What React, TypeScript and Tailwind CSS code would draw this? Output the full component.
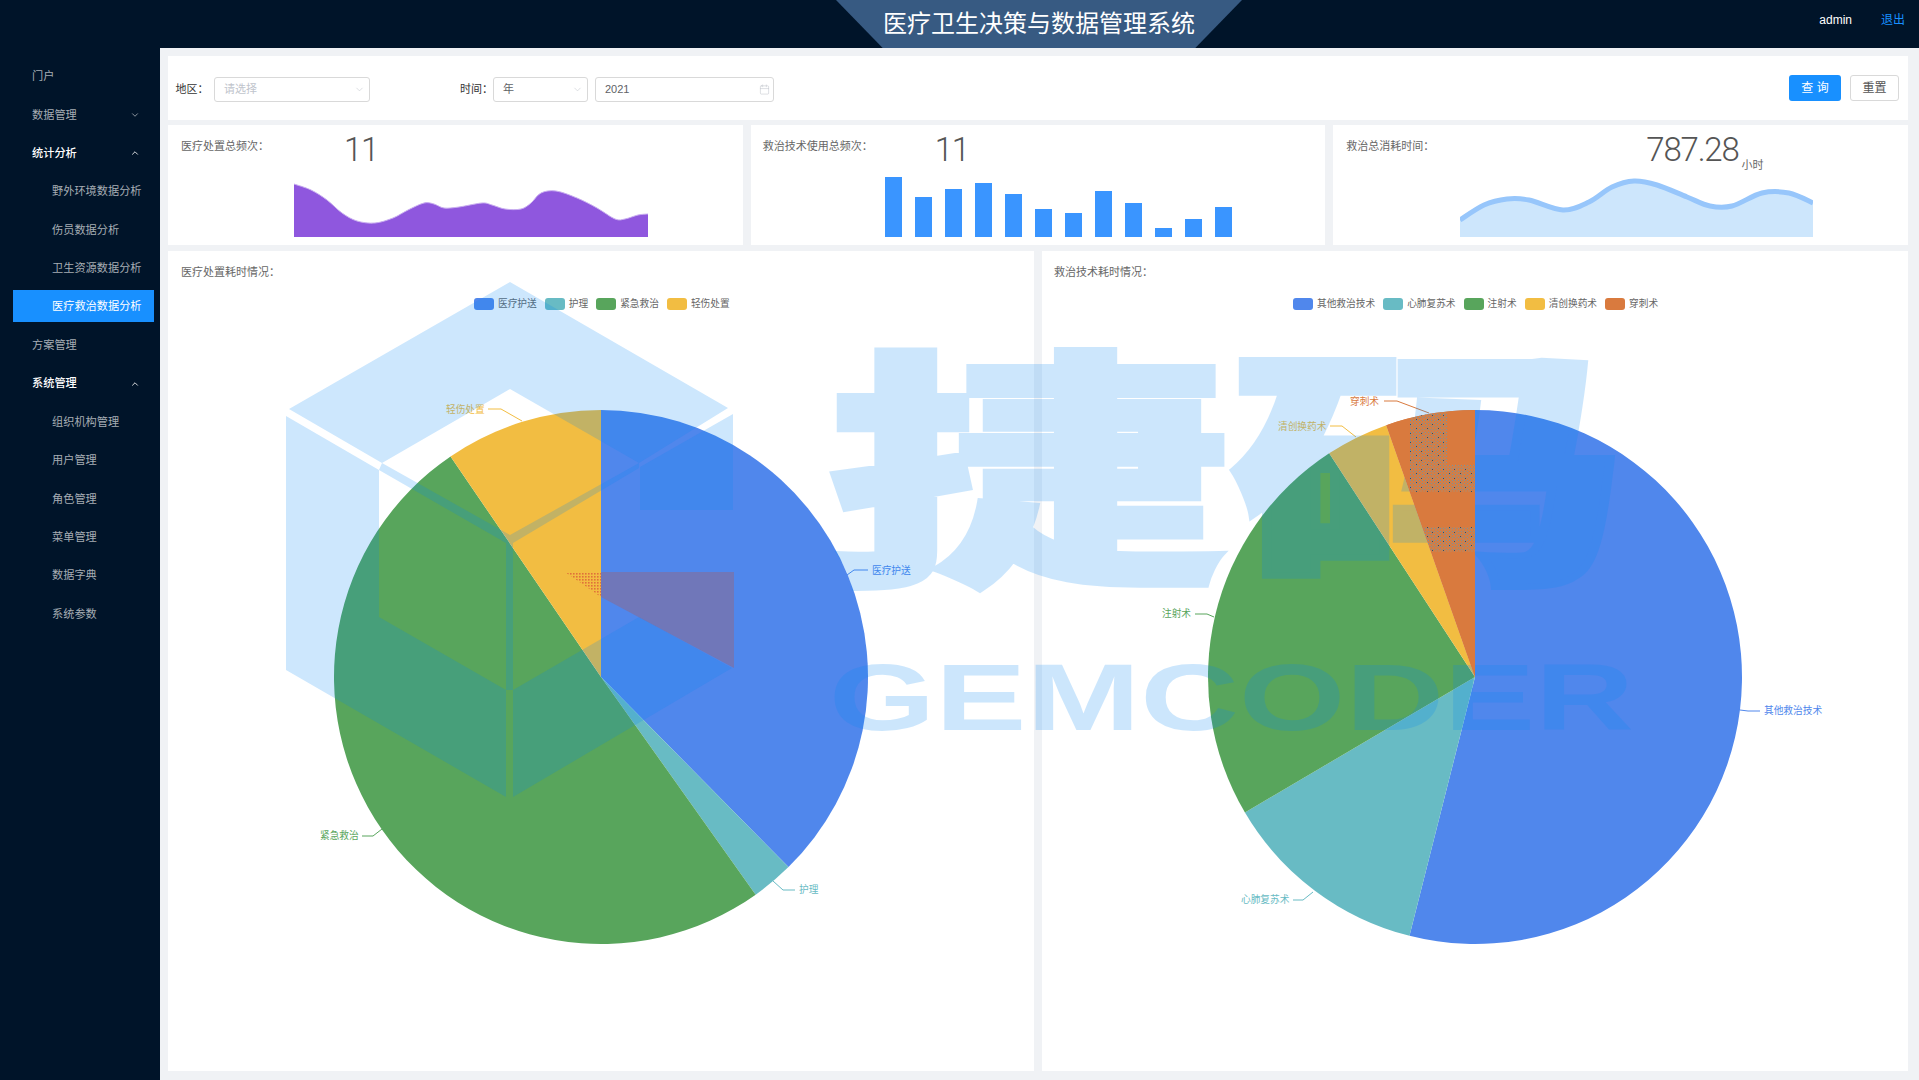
import { ChevronDown, ChevronUp, Calendar } from "lucide-react";

const BLUE = "#5087ec";
const TEAL = "#68bbc4";
const GREEN = "#58a55c";
const YELLOW = "#f2bd42";
const ORANGE = "#d97a3e";

type Slice = {
  name: string;
  color: string;
  to: number;
  line: string;
  labelX: number;
  labelY: number;
};

const careSlices: Slice[] = [
  { name: "医疗护送", color: BLUE, to: 135.4, line: "847,575 854,570 868,570", labelX: 872, labelY: 570 },
  { name: "护理", color: TEAL, to: 144.6, line: "773,881 783,890 795,890", labelX: 799, labelY: 889 },
  { name: "紧急救治", color: GREEN, to: 325.7, line: "382,829 373,836 362,836", labelX: 320, labelY: 835 },
  { name: "轻伤处置", color: YELLOW, to: 360, line: "522,421 501,409 488,409", labelX: 446, labelY: 409 },
];

const techSlices: Slice[] = [
  { name: "其他救治技术", color: BLUE, to: 194.2, line: "1740,710 1748,711 1760,711", labelX: 1764, labelY: 710 },
  { name: "心肺复苏术", color: TEAL, to: 239.5, line: "1313,892 1303,900 1293,900", labelX: 1241, labelY: 899 },
  { name: "注射术", color: GREEN, to: 326.9, line: "1214,617 1207,614 1195,614", labelX: 1162, labelY: 613 },
  { name: "清创换药术", color: YELLOW, to: 340.6, line: "1356,437 1342,426 1330,426", labelX: 1278, labelY: 426 },
  { name: "穿刺术", color: ORANGE, to: 360, line: "1429,413 1397,401 1384,401", labelX: 1350, labelY: 401 },
];

const menu = [
  { label: "门户", level: 0 },
  { label: "数据管理", level: 0, arrow: "down" },
  { label: "统计分析", level: 0, arrow: "up", open: true },
  { label: "野外环境数据分析", level: 1 },
  { label: "伤员数据分析", level: 1 },
  { label: "卫生资源数据分析", level: 1 },
  { label: "医疗救治数据分析", level: 1, active: true },
  { label: "方案管理", level: 0 },
  { label: "系统管理", level: 0, arrow: "up", open: true },
  { label: "组织机构管理", level: 1 },
  { label: "用户管理", level: 1 },
  { label: "角色管理", level: 1 },
  { label: "菜单管理", level: 1 },
  { label: "数据字典", level: 1 },
  { label: "系统参数", level: 1 },
];

const purpleWave: [number, number][] = [
  [0, 7], [17, 13], [33, 23], [48, 36], [63, 44], [81, 46], [99, 41], [114, 33], [130, 26],
  [140, 27], [150, 31], [165, 30], [188, 26], [198, 28], [211, 32], [227, 32], [237, 26],
  [247, 16], [262, 14], [283, 21], [303, 31], [321, 42], [331, 42], [344, 38], [354, 37],
];

const blueWave: [number, number][] = [
  [0, 43], [24, 28], [47, 22], [69, 23], [103, 33], [129, 25], [152, 10], [174, 4], [197, 8],
  [227, 20], [250, 29], [272, 29], [302, 16], [329, 16], [353, 26],
];

const bars = [60, 40, 48, 54, 43, 28, 24, 46, 34, 9, 18, 30];

function smooth(pts: [number, number][]) {
  let d = `M${pts[0][0]} ${pts[0][1]}`;
  for (let i = 0; i < pts.length - 1; i++) {
    const p0 = pts[Math.max(i - 1, 0)];
    const p1 = pts[i];
    const p2 = pts[i + 1];
    const p3 = pts[Math.min(i + 2, pts.length - 1)];
    d += ` C${p1[0] + (p2[0] - p0[0]) / 6} ${p1[1] + (p2[1] - p0[1]) / 6} ${p2[0] - (p3[0] - p1[0]) / 6} ${p2[1] - (p3[1] - p1[1]) / 6} ${p2[0]} ${p2[1]}`;
  }
  return d;
}

function Wave({ pts, w, fill, stroke, strokeWidth }: { pts: [number, number][]; w: number; fill: string; stroke: string; strokeWidth: number }) {
  const line = smooth(pts);
  return (
    <svg width={w} height={60} viewBox={`0 0 ${w} 60`}>
      <path d={`${line} L${w} 60 L0 60 Z`} fill={fill} />
      <path d={line} fill="none" stroke={stroke} strokeWidth={strokeWidth} />
    </svg>
  );
}

function wedge(cx: number, cy: number, r: number, from: number, to: number) {
  const pt = (deg: number) => {
    const a = (deg * Math.PI) / 180;
    return `${cx + r * Math.sin(a)} ${cy - r * Math.cos(a)}`;
  };
  return `M${cx} ${cy} L${pt(from)} A${r} ${r} 0 ${to - from > 180 ? 1 : 0} 1 ${pt(to)} Z`;
}

function Pie({ x0, cx, slices }: { x0: number; cx: number; slices: Slice[] }) {
  let from = 0;
  return (
    <svg className="block w-full flex-1" viewBox={`${x0} 320 866 751`} preserveAspectRatio="xMinYMin meet">
      {slices.map((s) => {
        const d = wedge(cx, 677, 267, from, s.to);
        from = s.to;
        return <path key={s.name} d={d} fill={s.color} />;
      })}
      {slices.map((s) => (
        <g key={s.name}>
          <polyline points={s.line} fill="none" stroke={s.color} strokeWidth={1} />
          <text x={s.labelX} y={s.labelY} fill={s.color} fontSize={9.7} dominantBaseline="central">
            {s.name}
          </text>
        </g>
      ))}
    </svg>
  );
}

function Legend({ items, className }: { items: Slice[]; className: string }) {
  return (
    <div className={`flex items-center gap-2 h-3 text-[9.7px] text-[#666] ${className}`}>
      {items.map((s) => (
        <div key={s.name} className="flex items-center gap-1">
          <span className="w-5 h-[11.5px] rounded-[3px]" style={{ background: s.color }} />
          <span>{s.name}</span>
        </div>
      ))}
    </div>
  );
}

function Select({ text, className, muted }: { text: string; className: string; muted?: boolean }) {
  return (
    <div className={`h-[25px] flex items-center justify-between pl-[9px] pr-[4px] border border-[#d9d9d9] rounded-[3px] text-[11px] ${muted ? "text-[#c0c4cc]" : "text-[#606266]"} ${className}`}>
      <span>{text}</span>
      <ChevronDown className="w-[11px] h-[11px] text-[#c0c4cc]" strokeWidth={1.2} />
    </div>
  );
}

// The logo overlay sits on top of the whole page
function Watermark() {
  const spike = wedge(1475, 677, 267, 340.6, 360);
  return (
    <svg className="absolute left-0 top-0 pointer-events-none" width={1919} height={1080} viewBox="0 0 1919 1080">
      <defs>
        <pattern id="fine" width={3} height={3} patternUnits="userSpaceOnUse">
          <rect width={1} height={1} fill="#6f98a8" />
          <rect x={1.5} y={1.5} width={1} height={1} fill="#8a9a94" />
        </pattern>
        <pattern id="dark" width={11} height={9} patternUnits="userSpaceOnUse">
          <rect x={2} y={1} width={1} height={1} fill="#2f4f6b" />
          <rect x={8} y={5} width={1} height={1} fill="#2f4f6b" />
        </pattern>
        <pattern id="speck" width={3} height={3} patternUnits="userSpaceOnUse">
          <rect width={1.6} height={1.6} fill="#e0703a" />
        </pattern>
        <clipPath id="spike">
          <path d={spike} />
        </clipPath>
      </defs>
      <path
        fill="rgba(5,135,245,0.2)"
        d="M510 282 L728 408 L639 463 L510 389 L382 463 L289 409 Z
           M286 416 L379 470 L379 617 L506 690 L506 797 L286 670 Z
           M382 463 L510 535 L639 463 L639 468 L513 543 L513 690 L506 690 L506 543 L379 470 Z
           M513 690 L639 617 L732 668 L513 797 Z
           M640 467 L733 414 L733 510 L640 510 Z"
      />
      <path fill="rgba(208,71,30,0.25)" d="M601 572 L734 572 L734 668 L601 597 Z" />
      <path fill="url(#speck)" d="M565 572 L601 572 L601 597 Z" />
      <text
        x={828}
        y={564}
        textLength={800}
        lengthAdjust="spacingAndGlyphs"
        fontSize={250}
        fontWeight={900}
        fontFamily="'Noto Sans CJK SC', sans-serif"
        fill="rgb(5,135,245)"
        stroke="rgb(5,135,245)"
        strokeWidth={6}
        opacity={0.2}
      >
        捷码
      </text>
      <text
        x={829}
        y={730}
        textLength={805}
        lengthAdjust="spacingAndGlyphs"
        fontSize={95}
        fontWeight={700}
        fontFamily="'Liberation Sans', sans-serif"
        fill="rgb(5,135,245)"
        opacity={0.2}
      >
        GEMCODER
      </text>
      <path d={spike} fill={ORANGE} />
      <g clipPath="url(#spike)">
        <path d="M1410 412 H1447 V465 H1475 V492 H1410 Z M1423 527 H1475 V552 H1423 Z" fill="url(#fine)" />
        <path d="M1410 412 H1447 V465 H1475 V492 H1410 Z M1423 527 H1475 V552 H1423 Z" fill="url(#dark)" />
      </g>
    </svg>
  );
}

export default function App() {
  return (
    <div className="relative w-full h-screen overflow-hidden flex flex-col font-['Liberation_Sans','Noto_Sans_CJK_SC',sans-serif] bg-[#001429]">
      {/* Header */}
      <header className="relative h-12 shrink-0">
        <div className="absolute left-[836px] top-0 w-[406px] h-12 flex items-center justify-center bg-[#375a82] [clip-path:polygon(0_0,100%_0,88.5%_100%,11.5%_100%)]">
          <h1 className="text-white text-2xl font-normal">医疗卫生决策与数据管理系统</h1>
        </div>
        <div className="absolute right-[14px] top-0 h-10 flex items-center gap-[29px] text-xs">
          <span className="text-white">admin</span>
          <span className="text-[#1890ff]">退出</span>
        </div>
      </header>

      <div className="flex flex-1 min-h-0">
        {/* Sidebar */}
        <aside className="w-40 shrink-0 pt-[8.5px] text-[11.2px]">
          {menu.map((m) => (
            <div key={m.label} className="h-[38.4px] flex items-center pl-[13px] pr-[6px]">
              <div
                className={`relative w-full h-8 flex items-center ${m.level ? "pl-[39px]" : "pl-[19px]"} ${
                  m.active ? "bg-[#1890ff] text-white" : m.open ? "pt-[2px] text-white font-medium" : "pt-[2px] text-[#a6adb4]"
                }`}
              >
                {m.label}
                {m.arrow === "down" && <ChevronDown className="absolute right-[14px] w-[10px] h-[10px]" />}
                {m.arrow === "up" && <ChevronUp className="absolute right-[14px] w-[10px] h-[10px]" />}
              </div>
            </div>
          ))}
        </aside>

        {/* Content */}
        <main className="flex-1 min-w-0 bg-[#f0f2f5] pt-2 pl-2 pr-[11px] pb-[9px] flex flex-col">
          <div className="h-16 shrink-0 bg-white flex items-center pl-[7.5px] pr-[9px] text-[11px] text-[#333]">
            <div className="flex items-center mt-[3px]">
              <span className="w-[38.5px]">地区：</span>
              <Select text="请选择" muted className="w-[156px]" />
              <span className="ml-[90px] w-[33px]">时间：</span>
              <Select text="年" className="w-[95px]" />
              <div className="ml-[7px] w-[179px] h-[25px] flex items-center justify-between pl-[9px] pr-[3px] border border-[#d9d9d9] rounded-[3px] text-[#606266]">
                <span>2021</span>
                <Calendar className="w-[11px] h-[11px] text-[#c0c4cc]" strokeWidth={1.2} />
              </div>
            </div>
            <div className="ml-auto flex gap-[9px] text-xs">
              <button className="w-[52px] h-[26px] rounded-[3px] bg-[#1890ff] text-white">查 询</button>
              <button className="w-[49px] h-[26px] rounded-[3px] border border-[#d9d9d9] text-[#555]">重置</button>
            </div>
          </div>

          <div className="mt-[5px] h-[120px] shrink-0 grid grid-cols-3 gap-2">
            <div className="bg-white flex flex-col pb-2">
              <div className="flex pl-[13px] text-[11px] text-[#666] pt-[13px]">
                <span className="w-[163px]">医疗处置总频次：</span>
                <span className="-mt-[6px] font-['Roboto'] text-[33px] leading-[36px] tracking-[-1.2px] font-light text-[#555]">11</span>
              </div>
              <div className="mt-auto ml-[126px]">
                <Wave pts={purpleWave} w={354} fill="#8f57de" stroke="#c9aef0" strokeWidth={1} />
              </div>
            </div>
            <div className="bg-white flex flex-col pb-2">
              <div className="flex pl-3 text-[11px] text-[#666] pt-[13px]">
                <span className="w-[172px]">救治技术使用总频次：</span>
                <span className="-mt-[6px] font-['Roboto'] text-[33px] leading-[36px] tracking-[-1.2px] font-light text-[#555]">11</span>
              </div>
              <div className="mt-auto ml-[134px] h-[60px] flex items-end gap-[13px]">
                {bars.map((h, i) => (
                  <div key={i} className="w-[17px] bg-[#3a95ff]" style={{ height: h }} />
                ))}
              </div>
            </div>
            <div className="bg-white flex flex-col pb-2">
              <div className="flex pl-[13px] text-[11px] text-[#666] pt-[13px]">
                <span className="w-[300px]">救治总消耗时间：</span>
                <span className="-mt-[6px] font-['Roboto'] text-[33px] leading-[36px] tracking-[-1.2px] font-light text-[#555]">787.28</span>
                <span className="mt-[19px] ml-[3px]">小时</span>
              </div>
              <div className="mt-auto ml-[127px]">
                <Wave pts={blueWave} w={353} fill="#cde6fc" stroke="#97c6fb" strokeWidth={5} />
              </div>
            </div>
          </div>

          <div className="mt-[6px] flex-1 min-h-0 grid grid-cols-2 gap-2">
            <section className="bg-white flex flex-col min-h-0">
              <div className="pl-[13px] pt-[15px] text-[11px] leading-[13px] text-[#666]">医疗处置耗时情况：</div>
              <Legend items={careSlices} className="mt-[19px] ml-[306px] mb-[10px]" />
              <Pie x0={168} cx={601} slices={careSlices} />
            </section>
            <section className="bg-white flex flex-col min-h-0">
              <div className="pl-3 pt-[15px] text-[11px] leading-[13px] text-[#666]">救治技术耗时情况：</div>
              <Legend items={techSlices} className="mt-[19px] ml-[251px] mb-[10px]" />
              <Pie x0={1042} cx={1475} slices={techSlices} />
            </section>
          </div>
        </main>
      </div>

      <Watermark />
    </div>
  );
}
